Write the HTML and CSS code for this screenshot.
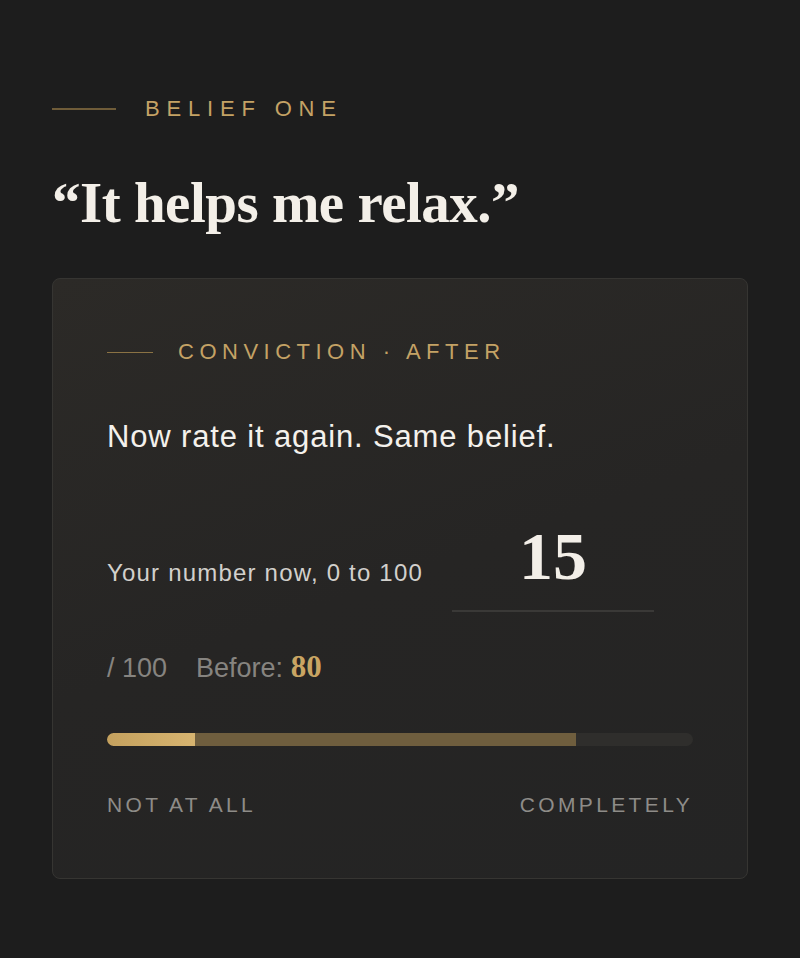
FILE: index.html
```html
<!DOCTYPE html>
<html lang="en">
<head>
    <meta charset="UTF-8">
    <meta name="viewport" content="width=device-width, initial-scale=1.0">
    <title>Belief One</title>
    <link rel="stylesheet" href="styles.css">
</head>
<body>
    <main class="page">
        <div class="eyebrow">
            <span class="eyebrow__rule"></span>
            <span class="eyebrow__text">Belief one</span>
        </div>

        <h1 class="belief">&ldquo;It helps me relax.&rdquo;</h1>

        <section class="card">
            <div class="eyebrow eyebrow--small">
                <span class="eyebrow__rule"></span>
                <span class="eyebrow__text">Conviction &middot; After</span>
            </div>

            <p class="prompt">Now rate it again. Same belief.</p>

            <div class="rating">
                <label class="rating__label" for="score">Your number now, 0 to 100</label>
                <input class="rating__input" id="score" type="text" value="15" aria-label="Your number now">
            </div>

            <div class="compare">
                <span class="compare__max">/ 100</span>
                <span class="compare__before">Before: <b>80</b></span>
            </div>

            <div class="meter">
                <div class="meter__before" style="width: 80%;"></div>
                <div class="meter__now" style="width: 15%;"></div>
            </div>

            <div class="scale">
                <span>Not at all</span>
                <span>Completely</span>
            </div>
        </section>
    </main>
</body>
</html>
```

FILE: styles.css
```css
body {
    margin: 0;
    background-color: #1d1d1d;
    color: #f2efe9;
    font-family: "Liberation Sans", Arial, sans-serif;
}

.page {
    padding: 96px 52px 60px;
}

.eyebrow {
    display: flex;
    align-items: center;
    gap: 29px;
}

.eyebrow__rule {
    width: 64px;
    height: 2px;
    background: #6f5c39;
}

.eyebrow__text {
    font-size: 22px;
    letter-spacing: 0.31em;
    text-transform: uppercase;
    color: #c4a265;
}

.belief {
    margin: 48px 0 42px;
    font-family: "Liberation Serif", "Times New Roman", serif;
    font-size: 57px;
    font-weight: bold;
    line-height: 66px;
    letter-spacing: -0.5px;
    color: #f3efe8;
}

.card {
    border: 1px solid #363532;
    border-radius: 8px;
    background: linear-gradient(160deg, #2c2a27 0%, #262524 50%, #242424 100%);
    padding: 60px 54px 61px;
}

.eyebrow--small {
    gap: 25px;
}

.eyebrow--small .eyebrow__rule {
    width: 46px;
    height: 1px;
    background: #8a7244;
}

.eyebrow--small .eyebrow__text {
    font-size: 22px;
    letter-spacing: 0.25em;
}

.prompt {
    margin: 54px 0 0;
    font-size: 31px;
    letter-spacing: 0.85px;
    color: #f4f1ec;
}

.rating {
    display: flex;
    align-items: flex-end;
    gap: 29px;
    margin-top: 62px;
}

.rating__label {
    padding-bottom: 25px;
    font-size: 24px;
    letter-spacing: 1.2px;
    color: #d2d0cc;
}

.rating__input {
    width: 202px;
    padding: 0 0 14px;
    border: none;
    border-bottom: 2px solid #3a3937;
    background: transparent;
    text-align: center;
    font-family: "Liberation Serif", "Times New Roman", serif;
    font-size: 68px;
    font-weight: bold;
    color: #f3efe8;
    outline: none;
}

.compare {
    display: flex;
    align-items: baseline;
    gap: 29px;
    margin-top: 37px;
    font-size: 27px;
    color: #868480;
}

.compare__before b {
    font-family: "Liberation Serif", "Times New Roman", serif;
    font-size: 31px;
    color: #c9a563;
}

.meter {
    position: relative;
    height: 13px;
    margin-top: 48px;
    border-radius: 7px;
    background: #2f2e2c;
    overflow: hidden;
}

.meter__before,
.meter__now {
    position: absolute;
    top: 0;
    left: 0;
    height: 100%;
}

.meter__before {
    background: #6f5e3e;
}

.meter__now {
    background: linear-gradient(90deg, #c4a15e, #d7b470);
    border-radius: 7px 0 0 7px;
}

.scale {
    display: flex;
    justify-content: space-between;
    margin-top: 47px;
    font-size: 21px;
    letter-spacing: 0.16em;
    text-transform: uppercase;
    color: #8e8c88;
}
```
